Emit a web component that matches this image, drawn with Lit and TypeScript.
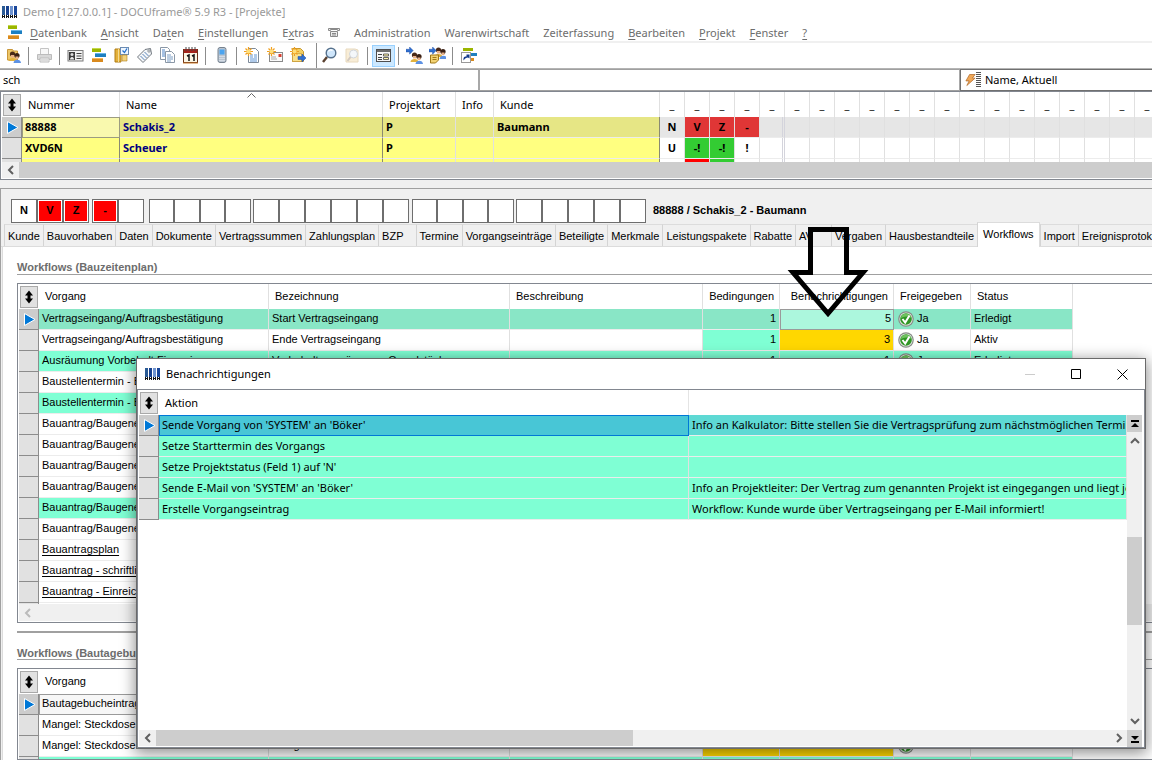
import { LitElement, html, svg, css, nothing, TemplateResult } from "lit";
import { customElement } from "lit/decorators.js";
import { classMap } from "lit/directives/class-map.js";

/* ---------- icons ---------- */

const logo = html`<svg class="logo" width="16" height="12" viewBox="0 0 16 12" aria-hidden="true">
  <rect x="0" y="0" width="3" height="12" fill="#2a5a94" /><rect x="4" y="0" width="3" height="12" fill="#17418f" />
  <rect x="8" y="0" width="3" height="12" fill="#6f93cf" /><rect x="12" y="0" width="3" height="12" fill="#1a479a" />
  ${[1, 5, 9, 13].map((x) => svg`<rect x=${x - 1} y="9" width="3" height="3" fill="#111" /><rect x=${x} y="9" width="1" height="1" fill="#fff" /><rect x=${x} y="11" width="1" height="1" fill="#fff" />`)}
</svg>`;

const bars = svg`<rect x="2" y="1" width="9" height="4" fill="#9bb500" /><rect x="2" y="1" width="9" height="1" fill="#c4d84a" />
  <rect x="5" y="6" width="11" height="4" fill="#1e7fc0" /><rect x="5" y="6" width="11" height="1" fill="#65b4e6" />
  <rect x="2" y="11" width="11" height="4" fill="#d98a1e" /><rect x="2" y="11" width="11" height="1" fill="#f3b75c" />`;
const star = svg`<path d="M4.500 0v9M0 4.500h9M1.500 1.500l6 6M7.500 1.500l-6 6" stroke="#f0a020" stroke-width="1.200" /><circle cx="4.500" cy="4.500" r="2" fill="#ffdf7a" />`;
const heads = svg`<circle cx="7.500" cy="7" r="2.600" fill="#4a2a18" /><path d="M6 8h3.500v2.500H6z" fill="#e8b088" /><path d="M3.500 14c0-4 8-4 8 0z" fill="#e2b23c" />
  <circle cx="12" cy="8.500" r="2.600" fill="#3a2014" /><path d="M10.500 9.500h3v2.500h-3z" fill="#e8b088" /><path d="M8.500 16c0-4.500 7.500-4.500 7.500 0z" fill="#5d92e4" />`;
const arrowR = svg`<path d="M0 2.500h4V0l4 4-4 4V5.500H0z" fill="#2f6fd0" stroke="#1c4da0" stroke-width=".5" />`;

const art: Record<string, TemplateResult> = {
  login: svg`<path d="M2.500 2.500h5l1 1.500h4v9h-10z" fill="#edc667" stroke="#c9973a" />${heads}`,
  print: svg`<path d="M4.500 1.500h8v6h-8z" fill="#f8f8f8" stroke="#c4c4c4" /><path d="M1.500 7.500h14v5h-14z" fill="#d8d8d8" stroke="#bcbcbc" /><path d="M4 11h9v4H4z" fill="#f4f4f4" stroke="#bcbcbc" /><path d="M5 13h7" stroke="#c4c4c4" />`,
  card: svg`<rect x="1" y="3.500" width="15" height="10.500" fill="#f2f2f2" stroke="#7b7b7b" /><path d="M2 5h6v8H2z" fill="#3c3c3c" /><circle cx="5" cy="7.500" r="1.500" fill="#ddd" /><path d="M3 12.500c0-3.500 4-3.500 4 0z" fill="#eee" /><path d="M9.500 6.500h5M9.500 9h5M9.500 11.500h5" stroke="#444" />`,
  bars,
  door: svg`<path d="M2 2h6v13H2z" fill="#e4b13a" stroke="#b07d14" /><path d="M5.500 2v13" stroke="#f6dc90" /><rect x="7.500" y=".5" width="8" height="7" fill="#eef6ff" stroke="#6b8cb4" /><path d="M9.500 3.500l2 2 2.500-4" fill="none" stroke="#2470cc" stroke-width="1.300" /><path d="M9 8h5v6H9z" fill="#f1d27c" stroke="#b07d14" stroke-width=".6" />`,
  tag: svg`<path d="M9 2.500l5.500-1 1 5.500-8.500 8.500L1.500 10z" fill="#f4f6f9" stroke="#71787f" /><circle cx="13" cy="4" r="1.200" fill="#fff" stroke="#71787f" stroke-width=".8" /><path d="M4.500 9l4 4M6.500 7l4 4M8.500 5l4 4" stroke="#5b86b8" />`,
  docs: svg`<path d="M1.500 .500h7l2 2v10h-9z" fill="#fff" stroke="#8a97a6" /><path d="M6.500 4.500h6l3 3v8h-9z" fill="#fff" stroke="#8a97a6" /><path d="M3 3h3M3 5h3M3 7h3M3 9h3" stroke="#4d83c6" /><path d="M8 8h4M8 10h6M8 12h6M8 14h4" stroke="#7b9dc4" />`,
  cal: svg`<rect x="1.500" y="2.500" width="14" height="13" fill="#fbf6e4" stroke="#6a3018" /><path d="M2 2h13v4H2z" fill="#a5241c" /><path d="M4 0v4M7 0v4M10 0v4M13 0v4" stroke="#444" /><path d="M5 9l2-1v6M10 9l2-1v6" fill="none" stroke="#141414" stroke-width="1.500" /><path d="M1 16h15" stroke="#c87c2c" />`,
  phone: svg`<rect x="5" y=".5" width="8" height="15" rx="2" fill="#b9c4d0" stroke="#76828f" /><rect x="6.500" y="2.500" width="5" height="5" fill="#4ba4f0" /><path d="M6.500 9.500h5M6.500 11.500h5M6.500 13.500h5" stroke="#eef3f8" stroke-dasharray="1 1" />`,
  newdoc: svg`<path d="M4.500 1.500h7l3 3v11h-10z" fill="#fff" stroke="#7c8a9a" /><path d="M6 8h3M10 8h3M6 10h3M10 10h3M6 12h7M6 14h7" stroke="#5e94d4" />${star}`,
  newmail: svg`<rect x="2.500" y="5.500" width="13" height="9" fill="#fafafa" stroke="#8a8a8a" /><path d="M11.500 7h3v3h-3z" fill="#d84030" /><path d="M4 10h5M4 12h6" stroke="#aaa" />${star}`,
  newfolder: svg`<path d="M2.500 1.500h8l3 3v10h-11z" fill="#f2cf62" stroke="#c49630" /><path d="M2.500 6.500h9v8h-9z" fill="#f9e08c" stroke="#c49630" stroke-width=".6" />${star}<g transform="translate(8 7)">${arrowR}</g>`,
  find: svg`<path d="M6 10L2 15" stroke="#5a4130" stroke-width="2.400" /><circle cx="10" cy="6" r="4.800" fill="#cfe6fb" stroke="#55708c" stroke-width="1.400" /><path d="M7.500 4.500c1-2 3-2 4-1" stroke="#fff" stroke-width="1.300" fill="none" />`,
  findbook: svg`<g opacity=".5"><path d="M2 2h9l3 1v12H2z" fill="#f3ddb0" stroke="#d2b47c" /><circle cx="9.500" cy="7" r="4" fill="#eaf0f6" stroke="#a3adb8" /><path d="M6.500 10l-3 4" stroke="#a89684" stroke-width="2" /></g>`,
  form: svg`<rect x="1.500" y="2.500" width="14" height="12" fill="#f7f7f7" stroke="#4e4e4e" /><path d="M2 3h13v2H2z" fill="#6c6c6c" /><path d="M3 7.500h4M3 10.500h4M3 12.500h4" stroke="#444" /><path d="M8.500 7h5v2h-5zM8.500 10.500h5v2h-5z" fill="#fff4a8" stroke="#444" stroke-width=".8" />`,
  users: svg`<g transform="translate(1 1)">${heads}</g><g transform="scale(.9)">${arrowR}</g>`,
  usersdoc: svg`<g transform="translate(2 -4)">${heads}</g><path d="M1.500 8h8v5l-3 3h-5z" fill="#f2d272" stroke="#a07818" /><path d="M3.500 10.500h4M3.500 12.500h4" stroke="#a07818" /><g transform="scale(.9)">${arrowR}</g>`,
  shortcut: svg`<rect x="3" y="1" width="10" height="3" fill="#9bb500" /><rect x="9" y="6" width="8" height="3" fill="#1e7fc0" /><rect x="9" y="11" width="5" height="3" fill="#d98a1e" /><rect x="1.500" y="5.500" width="9" height="10" fill="#fff" stroke="#999" /><path d="M3.500 13.500c0-3 0-4 3-4V7.500h3v4l-1.500-1c-2 0-3 1-4.500 3" fill="#123a8c" />`,
};
const icon = (name: string) => html`<svg class="ico" width="17" height="17" viewBox="0 0 17 17" aria-hidden="true">${art[name]}</svg>`;

const tick = html`<svg class="tick" width="16" height="16" viewBox="0 0 16 16" aria-hidden="true">
  <circle cx="8" cy="8" r="7.800" fill="#868c86" /><circle cx="8" cy="8" r="6.600" fill="#e4e8e4" /><circle cx="8" cy="8" r="5.800" fill="#2f9624" />
  <path d="M2.800 7a5.300 5.300 0 0 1 10.400 0c-3-2-7-2-10.400 0z" fill="#6fc25e" /><path d="M4.500 8l2.700 3.500L11.500 4.500" fill="none" stroke="#fff" stroke-width="2" />
</svg>`;
const updown = html`<svg width="10" height="14" viewBox="0 0 10 14" aria-hidden="true"><path d="M5 0.500l4 5H6.500v3H9l-4 5-4-5h2.500v-3H1z" fill="#000" /></svg>`;
const play = html`<svg class="play" width="12" height="13" viewBox="0 0 12 13" aria-label="Aktuelle Zeile"><path d="M.5 .5L11 6.500.5 12.500z" fill="#0078d7" stroke="#fff" /></svg>`;
const chev: Record<string, string> = {
  left: "M7 1L3 5l4 4", right: "M3 1l4 4-4 4", up: "M1 7l4-4 4 4", down: "M1 3l4 4 4-4",
};
const chevron = (d: string) => html`<svg width="10" height="10" viewBox="0 0 10 10" aria-hidden="true"><path d=${chev[d]} fill="none" stroke="currentColor" stroke-width="2" /></svg>`;

/* ---------- shared grid look ---------- */

const gridCss = css`
  table { border-collapse: separate; border-spacing: 0; table-layout: fixed; width: 0; }
  th, td {
    box-sizing: border-box; height: 21px; padding: 0 3px; line-height: 20px; overflow: hidden; white-space: nowrap; vertical-align: top;
    text-align: left; border-right: 1px solid #e0e0e0; border-bottom: 1px solid #ececec;
  }
  thead th { position: relative; height: 25px; padding: 0 6px; font-weight: 400; background: #fff; border-bottom: 0; line-height: 25px; }
  td.gut { padding: 0 0 0 2px; vertical-align: middle; border-right: 1px solid #8c8c8c; border-bottom: 1px solid #8c8c8c; background: #e1e1e1; text-align: center; line-height: 0; }
  thead .gut { border: 0; padding: 2px 1px 0; line-height: 0; }
  td.gut.cur { background: #ccc; }
  .num { text-align: right; }
  button { font: inherit; color: inherit; padding: 0; margin: 0; }
  .sorter { box-sizing: border-box; width: 18px; height: 22px; display: grid; place-items: center; background: #e1e1e1; border: 1px solid #a9a9a9; }
`;
const cols = (ws: number[]) => html`<colgroup>${ws.map((w) => html`<col style="width:${w}px" />`)}</colgroup>`;
const sorter = html`<th class="gut"><button class="sorter" aria-label="Sortierung">${updown}</button></th>`;

/* ---------- project list ---------- */

type Mark = [string, string];
interface Project { nr: string; name: string; art: string; kunde: string; marks: Mark[]; cur?: boolean }

@customElement("project-list")
export class ProjectList extends LitElement {
  static styles = [gridCss, css`
    :host { display: block; border: 1px solid #828790; border-right: 0; padding-left: 1px; background: #fff; overflow: hidden; }
    .view { height: 70px; overflow: hidden; }
    td { font-weight: 700; background: #ffff80; }
    .cur td { background: #e6e685; }
    td.nr, td.name, td.kunde { border-right-color: #8a8a72; }
    td.name { color: #000080; }
    .cur td.focus { background: #f9f9ae; padding: 0 2px; border: 1px solid #9c9c80; line-height: 18px; }
    .mark, .cur .mark { text-align: center; padding: 0; background: #fff; }
    .cur .mark { background: #e6e6e6; }
    .mark.red, .cur .mark.red { background: #e03636; }
    .mark.pure { background: #f00; }
    .mark.green { background: #33cc33; }
    .mark.split { border-right: 3px double #d4d4dc; }
    thead th.us { text-align: center; padding: 0; }
    .caret { position: absolute; left: 127px; top: 1px; }
    .bar { display: flex; height: 16px; margin-bottom: 1px; background: #cdcdcd; }
    .end { width: 17px; display: grid; place-items: center; background: #f0f0f0; color: #606060; }
  `];
  private rows: Project[] = [
    { nr: "88888", name: "Schakis_2", art: "P", kunde: "Baumann", cur: true, marks: [["N", ""], ["V", "red"], ["Z", "red"], ["-", "red"]] },
    { nr: "XVD6N", name: "Scheuer", art: "P", kunde: "", marks: [["U", ""], ["-!", "green"], ["-!", "green"], ["!", ""]] },
    { nr: "", name: "", art: "", kunde: "", marks: [["", ""], ["", "pure"], ["", "green"], ["", ""]] },
  ];
  render() {
    const n = Array.from({ length: 20 }, (_, i) => i);
    return html`<div class="view"><table>
      ${cols([20, 98, 263, 73, 38, 166, ...n.map(() => 25)])}
      <thead><tr>${sorter}<th>Nummer</th>
        <th>Name<svg class="caret" width="9" height="5" viewBox="0 0 9 5" aria-hidden="true"><path d="M.5 4.500l4-4 4 4" fill="none" stroke="#666" /></svg></th>
        <th>Projektart</th><th>Info</th><th>Kunde</th>${n.map(() => html`<th class="us">_</th>`)}</tr></thead>
      <tbody>${this.rows.map((r) => html`<tr class=${classMap({ cur: !!r.cur })}>
        <td class=${classMap({ gut: true, cur: !!r.cur })}>${r.cur ? play : nothing}</td>
        <td class=${classMap({ nr: true, focus: !!r.cur })}>${r.nr}</td><td class="name">${r.name}</td><td>${r.art}</td><td></td><td class="kunde">${r.kunde}</td>
        ${n.map((i) => { const [t, c] = r.marks[i] ?? ["", ""]; return html`<td class="mark ${c} ${i === 4 ? "split" : ""}">${t}</td>`; })}
      </tr>`)}</tbody></table></div>
      <div class="bar"><span class="end">${chevron("left")}</span></div>`;
  }
}

/* ---------- workflow table ---------- */

interface Step { v: string; b?: string; n1?: string; n2?: string; ok?: boolean; st?: string; bg?: string; gold?: boolean; mint1?: boolean; link?: boolean; cur?: boolean; focus?: string }

@customElement("workflow-grid")
export class WorkflowGrid extends LitElement {
  static properties = { rows: { attribute: false }, scroll: { type: Boolean } };
  declare rows: Step[];
  declare scroll: boolean;
  static styles = [gridCss, css`
    :host { display: flex; flex-direction: column; border: 1px solid #828790; border-right: 0; padding-left: 1px; background: #fff; overflow: hidden; }
    .view { flex: 1; min-height: 0; overflow: hidden; }
    td { line-height: 18px; }
    .mint td, td.mint1 { background: #7fffd4; }
    .sel td { background: #89e6c6; }
    td.gold { background: #ffd700; }
    td.focus { border: 1px solid #9a9a9a; padding: 0 2px; line-height: 16px; background: #f7f7f7; }
    .sel td.focus { background: #acf7dd; }
    .mint td.gut, .sel td.gut { background: #e1e1e1; }
    tr td.gut.cur { background: #ccc; }
    td.ja { padding-left: 4px; }
    .tick { vertical-align: top; margin: 2px 3px 0 0; }
    a { color: #000; text-decoration: underline; text-underline-offset: 2px; }
    thead th.num { padding-right: 5px; }
    .bar { display: flex; height: 17px; margin-bottom: 1px; background: #f0f0f0; }
    .end { width: 17px; display: grid; place-items: center; color: #bbb; }
  `];
  render() {
    return html`<div class="view"><table>
      ${cols([20, 230, 241, 193, 77, 114, 77, 102])}
      <thead><tr>${sorter}<th>Vorgang</th><th>Bezeichnung</th><th>Beschreibung</th><th class="num">Bedingungen</th><th class="num">Benachrichtigungen</th><th>Freigegeben</th><th>Status</th></tr></thead>
      <tbody>${this.rows.map((r) => html`<tr class=${r.bg ?? ""}>
        <td class=${classMap({ gut: true, cur: !!r.cur })}>${r.cur ? play : nothing}</td>
        <td class=${classMap({ focus: r.focus === "v" })}>${r.link ? html`<a href="#">${r.v}</a>` : r.v}</td>
        <td>${r.b}</td><td></td>
        <td class=${classMap({ num: true, mint1: !!r.mint1, gold: !!r.gold && !r.mint1 })}>${r.n1}</td>
        <td class=${classMap({ num: true, gold: !!r.gold, focus: r.focus === "n" })}>${r.n2}</td>
        <td class="ja">${r.ok ? html`${tick}Ja` : nothing}</td><td>${r.st}</td></tr>`)}</tbody></table></div>
      ${this.scroll ? html`<div class="bar"><span class="end">${chevron("left")}</span></div>` : nothing}`;
  }
}

/* ---------- notification window ---------- */

@customElement("notify-window")
export class NotifyWindow extends LitElement {
  static styles = [gridCss, css`
    :host { display: flex; flex-direction: column; box-sizing: border-box; border: 1px solid #6a6a6a; background: #fff; box-shadow: 0 3px 14px 1px rgba(0, 0, 0, .45); }
    .title { display: flex; align-items: center; height: 30px; flex: none; padding-left: 8px; }
    .title h2 { flex: 1; margin: 0; padding-left: 5px; font-weight: 400; font-size: 11px; }
    .title button { width: 46px; height: 28px; display: grid; place-items: center; background: none; border: 0; }
    .frame { flex: 1; min-height: 0; display: flex; flex-direction: column; border: 1px solid #828790; padding: 0 2px 1px 1px; }
    .top { flex: 1; min-height: 0; display: flex; }
    .view { flex: 1; min-width: 0; overflow: hidden; }
    table { width: 100%; }
    thead th { border-right-color: #e4e4e4; }
    thead th:last-child { border-right: 0; }
    tbody td { background: #7fffd4; }
    tbody td.gut { background: #e1e1e1; }
    .cur td { background: #5ed9d4; }
    tbody td.gut.cur { background: #ccc; }
    .cur td.focus { background: #48c6d6; border: 1px solid #0078d7; padding: 0 2px; line-height: 18px; }
    .vbar { width: 15px; flex: none; margin-top: 25px; display: flex; flex-direction: column; align-items: center; background: #f0f0f0; color: #606060; }
    .jump { width: 15px; height: 17px; display: grid; place-items: center; background: #cdcdcd; border: 0; }
    .step { height: 18px; display: grid; place-items: center; }
    .track { flex: 1; align-self: stretch; display: grid; grid-template-rows: 87fr 88fr 87fr; }
    .thumb { grid-row: 2; background: #cdcdcd; }
    .foot { display: flex; height: 16px; flex: none; }
    .hbar { flex: 1; display: flex; align-items: center; background: #f0f0f0; color: #606060; }
    .hbar .cell { width: 17px; display: grid; place-items: center; }
    .htrack { flex: 1; align-self: stretch; }
    .hthumb { width: 50%; height: 100%; background: #cdcdcd; }
  `];
  private rows = [
    ["Sende Vorgang von 'SYSTEM' an 'Böker'", "Info an Kalkulator: Bitte stellen Sie die Vertragsprüfung zum nächstmöglichen Termin"],
    ["Setze Starttermin des Vorgangs", ""],
    ["Setze Projektstatus (Feld 1) auf 'N'", ""],
    ["Sende E-Mail von 'SYSTEM' an 'Böker'", "Info an Projektleiter: Der Vertrag zum genannten Projekt ist eingegangen und liegt jetzt"],
    ["Erstelle Vorgangseintrag", "Workflow: Kunde wurde über Vertragseingang per E-Mail informiert!"],
  ];
  render() {
    return html`<div class="title">${logo}<h2>Benachrichtigungen</h2>
        <button aria-label="Minimieren"><svg width="11" height="11"><path d="M0 5.500h10" stroke="#ccc" /></svg></button>
        <button aria-label="Maximieren"><svg width="11" height="11"><path d="M.5 .5h9v9h-9z" fill="none" stroke="#000" /></svg></button>
        <button aria-label="Schließen"><svg width="11" height="11"><path d="M.5 .5l10 10M10.500 .5l-10 10" stroke="#000" /></svg></button></div>
      <div class="frame"><div class="top"><div class="view"><table>
        <colgroup><col style="width:20px" /><col style="width:530px" /><col /></colgroup>
        <thead><tr>${sorter}<th>Aktion</th><th></th></tr></thead>
        <tbody>${this.rows.map(([a, b], i) => html`<tr class=${classMap({ cur: i === 0 })}>
          <td class=${classMap({ gut: true, cur: i === 0 })}>${i === 0 ? play : nothing}</td>
          <td class=${classMap({ focus: i === 0 })}>${a}</td><td>${b}</td></tr>`)}</tbody></table></div>
        <div class="vbar"><button class="jump" aria-label="Anfang"><svg width="8" height="8"><path d="M0 1h8" stroke="#000" stroke-width="2" /><path d="M4 3l4 4H0z" /></svg></button>
          <span class="step">${chevron("up")}</span><div class="track"><div class="thumb"></div></div><span class="step">${chevron("down")}</span></div></div>
        <div class="foot"><div class="hbar"><span class="cell">${chevron("left")}</span><div class="htrack"><div class="hthumb"></div></div><span class="cell">${chevron("right")}</span></div>
          <button class="jump" aria-label="Ende"><svg width="8" height="8"><path d="M0 7h8" stroke="#000" stroke-width="2" /><path d="M4 5l4-4H0z" /></svg></button></div></div>`;
  }
}

/* ---------- application ---------- */

const box = (t = "", red = false) => html`<span class="box ${red ? "red" : ""}"><i>${t}</i></span>`;

@customElement("app-root")
export class AppRoot extends LitElement {
  static styles = css`
    :host { display: flex; flex-direction: column; position: relative; height: 100vh; overflow: hidden; background: #fff; color: #000; font: 11px/16px "Noto Sans", "Open Sans", sans-serif; }
    button { font: inherit; color: inherit; padding: 0; margin: 0; background: none; border: 0; }
    .title { display: flex; align-items: center; gap: 5px; height: 24px; padding-left: 2px; color: #999; }
    .title h1 { margin: 0; font-size: 11px; font-weight: 400; }
    .menu { display: flex; align-items: center; height: 17px; padding-left: 6px; border-bottom: 2px solid #f0f0f0; color: #6d6d6d; }
    .menu button { padding: 0 7px; line-height: 17px; }
    .menu u { text-underline-offset: 2px; }
    .tools { display: flex; align-items: center; height: 25px; padding-left: 2px; border-bottom: 1px solid #b4b4b4; }
    .tools button { width: 23px; height: 22px; display: grid; place-items: center; }
    .tools button.on { background: #cce8ff; box-shadow: inset 0 0 0 1px #99d1ff; }
    .sep { width: 1px; height: 18px; margin: 0 4px 0 3px; background: #8c8c8c; }
    .sep.tall { height: 25px; margin: 0 1px 0 6px; }
    .search { display: grid; grid-template-columns: 5fr 5fr 2fr; height: 22px; }
    .search input { min-width: 0; box-sizing: border-box; font: inherit; border: 0; border-top: 1px solid #a0a0a0; border-right: 2px solid #a8a8a8; border-bottom: 1px solid #a0a0a0; border-radius: 0; padding: 0 3px; outline: 0; background: #fff; color: #000; }
    .search input.mid { border-right-width: 1px; }
    .search button { display: flex; align-items: center; border: 1px solid #707070; border-right: 0; padding-left: 4px; }
    .search button span { padding-left: 4px; }
    .panel { flex: 1; min-height: 0; display: flex; flex-direction: column; border-top: 8px solid #f0f0f0; font-family: "Liberation Sans", Arial, sans-serif; }
    .page { display: flex; flex-direction: column; flex: 1; min-height: 0; border-top: 1px solid #a0a0a0; border-left: 1px solid #a0a0a0; background: #f0f0f0; }
    .status { display: flex; align-items: center; padding: 10px 0 0 10px; font-weight: 700; }
    .set { display: flex; margin-right: 3px; }
    .set.wide { margin-right: 5px; }
    .set.four { display: grid; grid-template-columns: 25px 26px 25px 26px; margin-right: 2px; }
    .box { box-sizing: border-box; width: 26px; height: 24px; padding: 1px; border: 1px solid #6e6e6e; background: #fff; }
    .four .box { width: auto; }
    .box i { display: block; height: 20px; line-height: 19px; font-style: normal; text-align: center; }
    .box.red i { background: #f00; }
    .status strong { padding-left: 4px; line-height: 14px; margin-bottom: 2px; }
    .tabs { display: flex; align-items: flex-end; height: 23px; padding-left: 3px; border-bottom: 1px solid #dcdcdc; }
    .tabs button { flex: none; height: 22px; padding: 0 3px; border-top: 1px solid #dcdcdc; border-left: 1px solid #d4d4d4; white-space: nowrap; }
    .tabs button.roomy { padding-right: 12px; }
    .tabs button.roomier { padding-right: 18px; }
    .tabs button.on { height: 25px; margin-bottom: -1px; padding: 0 5px 3px; background: #fff; border-right: 1px solid #dcdcdc; }
    .content { flex: 1; min-height: 0; display: flex; flex-direction: column; padding-left: 14px; margin-left: 1px; border-left: 1px solid #dcdcdc; background: #fff; }
    .content h2 { flex: none; box-sizing: border-box; height: 28px; margin: 0 0 8px; padding-top: 12px; border-bottom: 1px solid #a0a0a0; font-size: 11px; font-weight: 700; color: #6d6d6d; }
    .first { flex: none; height: 338px; }
    .split { flex: none; height: 2px; margin-top: 8px; background: #a0a0a0; }
    .content .split + h2 { height: 27px; }
    .second { flex: 1; min-height: 0; }
    .dialog { position: absolute; left: 136px; top: 358px; right: 6px; bottom: 11px; }
    .arrow { position: absolute; left: 786px; top: 224px; pointer-events: none; }
  `;
  private menu = ["_Datenbank", "_Ansicht", "Da_ten", "_Einstellungen", "E_xtras", "☎", "Administration", "Warenwirtschaft", "Zeiterfassung", "_Bearbeiten", "_Projekt", "_Fenster", "_?"];
  private tools = ["login", "|", "print", "|", "card", "bars", "door", "tag", "docs", "cal", "|", "phone", "|", "newdoc", "newmail", "newfolder", "||", "find", "findbook", "|", "form", "|", "users", "usersdoc", "|", "shortcut"];
  private tabs = ["Kunde", "Bauvorhaben", "Daten", "Dokumente", "Vertragssummen", "Zahlungsplan", "BZP", "Termine", "Vorgangseinträge", "Beteiligte", "Merkmale", "Leistungspakete", "Rabatte", "AV", "Vergaben", "Hausbestandteile", "Workflows", "Import", "Ereignisprotokoll"];
  private plan: Step[] = [
    { v: "Vertragseingang/Auftragsbestätigung", b: "Start Vertragseingang", n1: "1", n2: "5", ok: true, st: "Erledigt", bg: "sel", cur: true, focus: "n" },
    { v: "Vertragseingang/Auftragsbestätigung", b: "Ende Vertragseingang", n1: "1", n2: "3", ok: true, st: "Aktiv", mint1: true, gold: true },
    { v: "Ausräumung Vorbehalt Finanzierung", b: "Vorbehaltsausräumung Grundstück", n1: "1", n2: "1", ok: true, st: "Erledigt", bg: "mint" },
    { v: "Baustellentermin - B" }, { v: "Baustellentermin - B", bg: "mint" },
    { v: "Bauantrag/Baugene" }, { v: "Bauantrag/Baugene" }, { v: "Bauantrag/Baugene" }, { v: "Bauantrag/Baugene" },
    { v: "Bauantrag/Baugene", bg: "mint" }, { v: "Bauantrag/Baugene" },
    { v: "Bauantragsplan", link: true }, { v: "Bauantrag - schriftli", link: true }, { v: "Bauantrag - Einreich", link: true }, { v: "" },
  ];
  private diary: Step[] = [
    { v: "Bautagebucheintrag", cur: true, focus: "v" },
    { v: "Mangel: Steckdose" },
    { v: "Mangel: Steckdose Wohnen EG zur Küche oh.", b: "Mangel höher als 1000€", n1: "1", n2: "1", gold: true, ok: true, st: "Aktiv" },
    { v: "", bg: "mint" },
  ];
  private label(t: string) {
    const i = t.indexOf("_");
    return i < 0 ? t : html`${t.slice(0, i)}<u>${t[i + 1]}</u>${t.slice(i + 2)}`;
  }
  render() {
    return html`
      <header class="title">${logo}<h1>Demo [127.0.0.1] - DOCUframe® 5.9 R3 - [Projekte]</h1></header>
      <nav class="menu">${icon("bars")}${this.menu.map((m) => html`<button>${m === "☎" ? html`<svg width="12" height="10" viewBox="0 0 12 10" aria-label="Telefon"><path d="M.5 3.500v-2h11v2h-2v-1h-7v1zM2.500 4.500h7v5h-7z" fill="#eee" stroke="#8a8a8a" /><path d="M4 6.500h4M4 8h4" stroke="#8a8a8a" /></svg>` : this.label(m)}</button>`)}</nav>
      <div class="tools">${this.tools.map((t) => t === "|" ? html`<span class="sep"></span>` : t === "||" ? html`<span class="sep tall"></span>` : html`<button class=${t === "form" ? "on" : ""} aria-label=${t}>${icon(t)}</button>`)}</div>
      <div class="search"><input aria-label="Suche" .value=${"sch"} /><input class="mid" aria-label="Suche 2" />
        <button><svg width="11" height="14" viewBox="0 0 12 14" aria-hidden="true"><path d="M5 1h6L8 5h3L2 13l2.500-5H1z" fill="#f0a858" stroke="#b06a28" stroke-width=".8" /></svg>
          <svg width="5" height="16" viewBox="0 0 5 16" aria-hidden="true"><path d="M0 .5h5M0 2.500h5M0 4.500h5M0 6.500h5M0 8.500h5M0 10.500h5M0 12.500h5M0 14.500h5" stroke="#555" /></svg><span>Name, Aktuell</span></button></div>
      <project-list></project-list>
      <section class="panel">
        <div class="page">
        <div class="status">
          <div class="set">${box("N")}${box("V", true)}${box("Z", true)}</div><div class="set wide">${box("-", true)}${box()}</div>
          <div class="set four">${[0, 1, 2, 3].map(() => box())}</div><div class="set">${[0, 1, 2, 3, 4, 5].map(() => box())}</div>
          <div class="set four">${[0, 1, 2, 3].map(() => box())}</div><div class="set">${[0, 1, 2, 3, 4].map(() => box())}</div>
          <strong>88888 / Schakis_2 - Baumann</strong></div>
        <nav class="tabs">${this.tabs.map((t) => html`<button class=${classMap({ on: t === "Workflows", roomy: t === "BZP", roomier: t === "AV" })}>${t}</button>`)}</nav>
        <div class="content">
          <h2>Workflows (Bauzeitenplan)</h2><workflow-grid class="first" .rows=${this.plan} .scroll=${true}></workflow-grid>
          <div class="split"></div>
          <h2>Workflows (Bautagebuch)</h2><workflow-grid class="second" .rows=${this.diary}></workflow-grid>
        </div></div>
      </section>
      <notify-window class="dialog" role="dialog" aria-label="Benachrichtigungen"></notify-window>
      <svg class="arrow" width="84" height="98" viewBox="786 224 84 98" aria-hidden="true"><path d="M810.500 229.500H846.500V272.500H863L828 313.500L793 272.500H810.500Z" fill="none" stroke="#000" stroke-width="5" /></svg>`;
  }
}
